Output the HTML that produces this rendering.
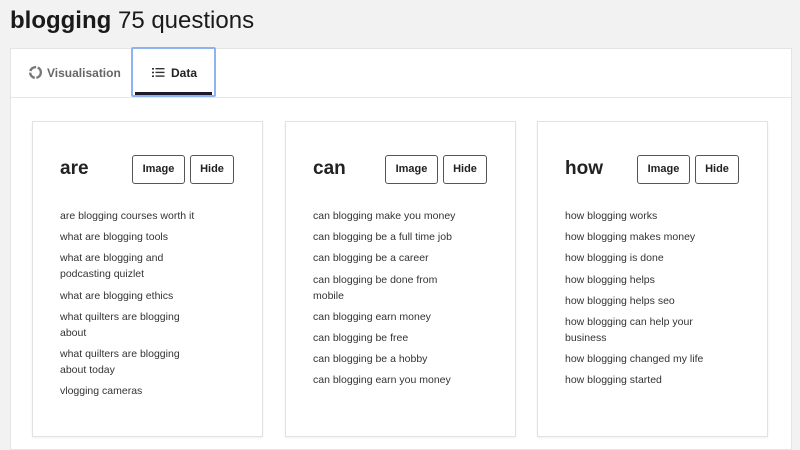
<!DOCTYPE html>
<html><head><style>
body{margin:0;background:#f2f2f2;font-family:"Liberation Sans",sans-serif;width:800px;height:442px;overflow:hidden;position:relative;color:#222}
h1{position:absolute;left:10px;top:7px;margin:0;font-size:24px;font-weight:normal;color:#1a1a1a}
h1 b{font-weight:bold}
.panel{position:absolute;left:10px;top:48px;width:780px;height:400px;background:#fff;border:1px solid #e4e4e4}
.tabs{position:absolute;left:0;top:0;width:780px;height:48px;border-bottom:1px solid #e6e6e6}
.tab1{position:absolute;left:17px;top:16px;font-size:12px;font-weight:bold;color:#666}
.tab2{position:absolute;left:120px;top:-2px;width:85px;height:50px;border:2px solid #8fb3f0;border-radius:2px;box-sizing:border-box}
.tab2 span{position:absolute;left:19px;top:17px;font-size:12px;font-weight:bold;color:#222}
.tab2 i{position:absolute;left:2px;right:2px;bottom:0;height:3px;background:#1a1a2a}
.card{position:absolute;top:121px;width:231px;height:316px;background:#fff;border:1px solid #e2e2e2;box-sizing:border-box;box-shadow:0 1px 2px rgba(0,0,0,.06)}
.card h2{position:absolute;left:27px;top:36px;margin:0;font-size:19px;font-weight:bold}
.btn{position:absolute;top:33px;height:29px;border:1px solid #555;border-radius:3px;box-sizing:border-box;font-size:11px;font-weight:bold;text-align:center;line-height:27px}
.b1{left:99px;width:53px}.b2{left:157px;width:44px}
ul{position:absolute;left:27px;top:86px;width:145px;margin:0;padding:0;list-style:none;font-size:10.5px;line-height:16px;color:#333}
li{margin-bottom:5.2px}
</style></head><body>
<h1><b>blogging</b> 75 questions</h1>
<div class="panel">
<div class="tabs">
<div class="tab1"><svg width="15" height="15" viewBox="0 0 14 14" style="vertical-align:-3px;margin-right:4px"><circle cx="7" cy="7" r="5" fill="none" stroke="#777" stroke-width="2.2" stroke-dasharray="7 1.5"/></svg>Visualisation</div>
<div class="tab2"><span><svg width="13" height="11" viewBox="0 0 13 11" style="vertical-align:-1px;margin-right:6px"><g fill="#333"><rect x="0" y="1" width="2" height="1.6"/><rect x="0" y="4.7" width="2" height="1.6"/><rect x="0" y="8.4" width="2" height="1.6"/><rect x="3.5" y="1" width="9" height="1.4"/><rect x="3.5" y="4.7" width="9" height="1.4"/><rect x="3.5" y="8.4" width="9" height="1.4"/></g></svg>Data</span><i></i></div>
</div>
</div>
<div class="card" style="left:32px"><h2>are</h2><div class="btn b1">Image</div><div class="btn b2">Hide</div>
<ul><li>are blogging courses worth it</li><li>what are blogging tools</li><li>what are blogging and podcasting quizlet</li><li>what are blogging ethics</li><li>what quilters are blogging about</li><li>what quilters are blogging about today</li><li>vlogging cameras</li></ul></div>
<div class="card" style="left:285px"><h2>can</h2><div class="btn b1">Image</div><div class="btn b2">Hide</div>
<ul><li>can blogging make you money</li><li>can blogging be a full time job</li><li>can blogging be a career</li><li>can blogging be done from mobile</li><li>can blogging earn money</li><li>can blogging be free</li><li>can blogging be a hobby</li><li>can blogging earn you money</li></ul></div>
<div class="card" style="left:537px"><h2>how</h2><div class="btn b1">Image</div><div class="btn b2">Hide</div>
<ul><li>how blogging works</li><li>how blogging makes money</li><li>how blogging is done</li><li>how blogging helps</li><li>how blogging helps seo</li><li>how blogging can help your business</li><li>how blogging changed my life</li><li>how blogging started</li></ul></div>
</body></html>
